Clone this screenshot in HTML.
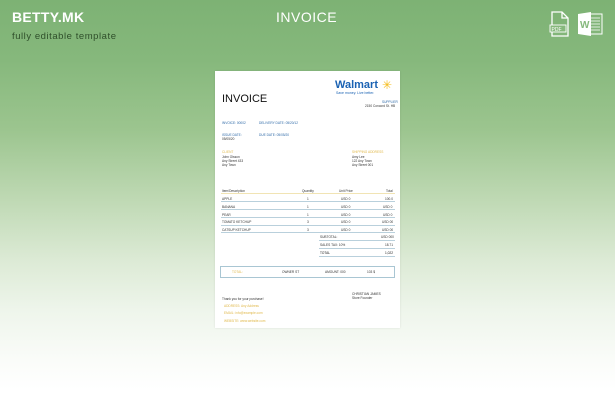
<!DOCTYPE html>
<html><head><meta charset="utf-8"><style>
*{margin:0;padding:0;box-sizing:border-box}
body{width:615px;height:400px;overflow:hidden;position:relative;font-family:"Liberation Sans",sans-serif;
background:linear-gradient(to bottom,#7db274 0px,#86b87c 60px,#9cc58f 130px,#bfd9b4 200px,#dcead5 260px,#eef5eb 310px,#fafcf9 360px,#ffffff 390px)}
.a{position:absolute;white-space:nowrap}
.p{position:absolute;left:215px;top:71px;width:185px;height:257px;background:#fff;box-shadow:0 0 2px rgba(0,0,0,.1)}
.t{font-size:3.2px;color:#333}
.b{font-size:3.2px;color:#2f6aa8}
.y{font-size:3.2px;color:#e0b84a}
.row{position:absolute;left:6px;width:174px;height:7.5px;border-bottom:0.7px solid #b9d0dc}
</style></head><body>
<div class="a" style="left:12px;top:9px;font-size:14px;font-weight:bold;color:#fff;letter-spacing:0.3px">BETTY.MK</div>
<div class="a" style="left:12px;top:31px;font-size:9.5px;color:#2f4f2a;letter-spacing:0.55px">fully editable template</div>
<div class="a" style="left:276px;top:9px;font-size:14px;color:#fff;letter-spacing:0.5px">INVOICE</div>
<svg class="a" style="left:548px;top:11px" width="24" height="26" viewBox="0 0 24 26"><path d="M4 1h10l6 6v18H4z M14 1v6h6" fill="none" stroke="#fff" stroke-width="1.3"/><rect x="2" y="14" width="16" height="7" fill="#86b87c" stroke="#fff" stroke-width="0.9"/><text x="3.5" y="19.8" font-size="5" fill="#fff" font-family="Liberation Sans">PDF</text></svg>
<svg class="a" style="left:577px;top:11px" width="26" height="26" viewBox="0 0 26 26"><rect x="11" y="3" width="14" height="20" fill="none" stroke="#fff" stroke-width="1"/><path d="M14 7h9M14 10h9M14 13h9M14 16h9M14 19h9" stroke="#fff" stroke-width="0.8"/><path d="M1 3l13-2v24L1 23z" fill="#fff"/><text x="3" y="17" font-size="10" font-weight="bold" fill="#86b87c" font-family="Liberation Sans">W</text></svg>

<div class="p">
<div class="a" style="left:7px;top:22px;font-size:11px;color:#111">INVOICE</div>
<div class="a" style="left:120px;top:8px;font-size:11px;font-weight:bold;color:#1a62b3">Walmart</div>
<div class="a" style="left:167px;top:8px;font-size:12px;color:#f6bd1b;line-height:12px">✳</div>
<div class="a" style="left:121px;top:20px;font-size:3.5px;color:#1a62b3">Save money. Live better.</div>
<div class="a b" style="left:167px;top:29px">SUPPLIER</div>
<div class="a t" style="left:150px;top:33px">2150 Concord St. HB</div>
<div class="a b" style="left:7px;top:50px">INVOICE: 00002</div>
<div class="a b" style="left:44px;top:50px">DELIVERY DATE: 05/20/12</div>
<div class="a b" style="left:7px;top:62px">ISSUE DATE:</div><div class="a t" style="left:7px;top:66px">05/05/20</div>
<div class="a b" style="left:44px;top:62px">DUE DATE: 05/05/20</div>
<div class="a y" style="left:7px;top:79px">CLIENT</div>
<div class="a t" style="left:7px;top:84px">John Olsson</div><div class="a t" style="left:7px;top:88px">Any Street 433</div><div class="a t" style="left:7px;top:92px">Any Town</div>
<div class="a y" style="left:137px;top:79px">SHIPPING ADDRESS</div>
<div class="a t" style="left:137px;top:84px">Amy Lee</div><div class="a t" style="left:137px;top:88px">122 Any Town</div><div class="a t" style="left:137px;top:92px">Any Street 001</div>
<div class="row" style="top:115px;border-bottom-color:#f1e4b4"></div>
<div class="a t" style="left:7px;top:118px">Item/Description</div><div class="a t" style="left:87px;top:118px">Quantity</div><div class="a t" style="left:124px;top:118px">Unit Price</div><div class="a t" style="left:171px;top:118px">Total</div>
<div class="row" style="top:123px"></div><div class="a t" style="left:7px;top:126px">APPLE</div><div class="a t" style="left:92px;top:126px">1</div><div class="a t" style="left:126px;top:126px">USD 0</div><div class="a t" style="left:170px;top:126px">100.0</div>
<div class="row" style="top:131px"></div><div class="a t" style="left:7px;top:134px">BANANA</div><div class="a t" style="left:92px;top:134px">1</div><div class="a t" style="left:126px;top:134px">USD 0</div><div class="a t" style="left:168px;top:134px">USD 0</div>
<div class="row" style="top:139px"></div><div class="a t" style="left:7px;top:142px">PEAR</div><div class="a t" style="left:92px;top:142px">1</div><div class="a t" style="left:126px;top:142px">USD 0</div><div class="a t" style="left:168px;top:142px">USD 0</div>
<div class="row" style="top:147px"></div><div class="a t" style="left:7px;top:149px">TOMATO KETCHUP</div><div class="a t" style="left:92px;top:149px">3</div><div class="a t" style="left:126px;top:149px">USD 0</div><div class="a t" style="left:167px;top:149px">USD 00</div>
<div class="row" style="top:154px"></div><div class="a t" style="left:7px;top:157px">CATSUP KETCHUP</div><div class="a t" style="left:92px;top:157px">3</div><div class="a t" style="left:126px;top:157px">USD 0</div><div class="a t" style="left:167px;top:157px">USD 00</div>
<div class="row" style="top:162px;left:104px;width:76px"></div><div class="a t" style="left:105px;top:164px">SUBTOTAL:</div><div class="a t" style="left:166px;top:164px">USD 000</div>
<div class="row" style="top:170px;left:104px;width:76px"></div><div class="a t" style="left:105px;top:172px">SALES TAX: 10%</div><div class="a t" style="left:170px;top:172px">18.71</div>
<div class="row" style="top:178px;left:104px;width:76px"></div><div class="a t" style="left:105px;top:180px;color:#111">TOTAL</div><div class="a t" style="left:170px;top:180px;color:#111">1,022</div>
<div class="a" style="left:5px;top:195px;width:175px;height:12px;border:1px solid #a9c6d3"></div>
<div class="a y" style="left:17px;top:199px">TOTAL:</div><div class="a t" style="left:67px;top:199px">OWNER ST</div><div class="a t" style="left:110px;top:199px">AMOUNT: 000</div><div class="a t" style="left:152px;top:199px">103 $</div>
<div class="a t" style="left:137px;top:221px">CHRISTIAN JAMES</div><div class="a t" style="left:137px;top:225px">Store Founder</div>
<div class="a t" style="left:7px;top:226px">Thank you for your purchase!</div>
<div class="a y" style="left:9px;top:233px">ADDRESS: Any Address</div>
<div class="a y" style="left:9px;top:240px">EMAIL: info@example.com</div>
<div class="a y" style="left:9px;top:248px">WEBSITE: www.website.com</div>
</div>
</body></html>
